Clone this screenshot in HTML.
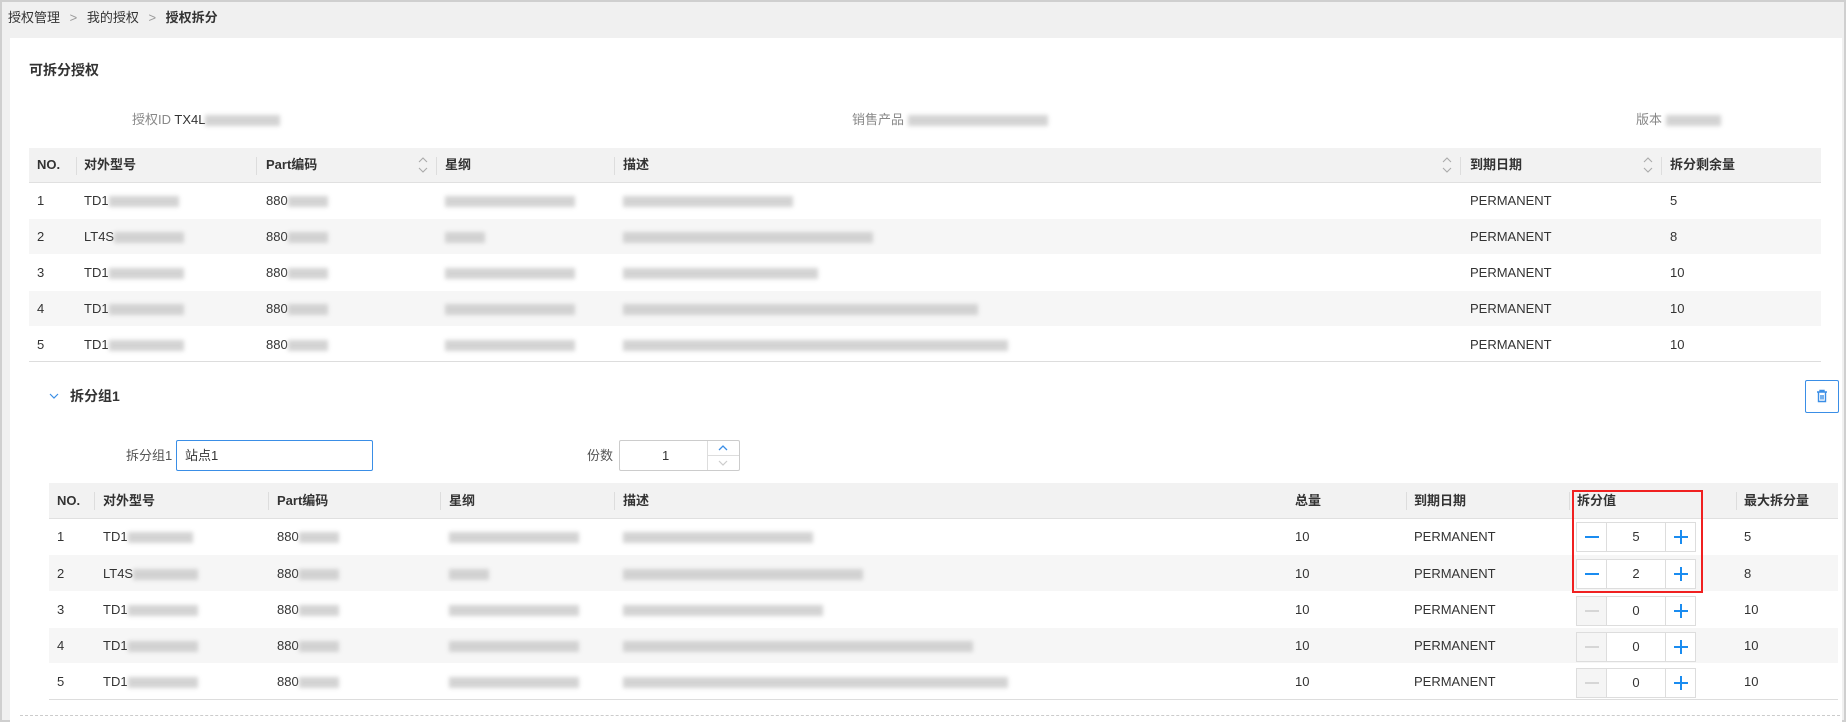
<!DOCTYPE html>
<html><head><meta charset="utf-8"><style>
*{box-sizing:border-box;margin:0;padding:0}
body{width:1846px;height:722px;background:#f0f0f0;font-family:"Liberation Sans","Noto Sans CJK SC",sans-serif;font-size:13px;color:#333;position:relative;overflow:hidden;border:2px solid #cfcfcf}
.a{position:absolute;white-space:nowrap;line-height:16px}
.card{position:absolute;left:8px;top:36px;width:1832px;height:684px;background:#fff}
.bl{display:inline-block;height:11px;background:#c8c8c8;filter:blur(2px);vertical-align:middle;opacity:.8}
.hd{position:absolute;background:#f2f2f2;border-bottom:1px solid #e0e0e0}
.row{position:absolute;border-bottom:1px solid #fff}
.alt{background:#f6f6f6}
.sep{position:absolute;width:1px;height:18px;background:#ddd}
.th{font-weight:bold;color:#333}
.sort{position:absolute}
.step{position:absolute;width:120px;height:30px;border:1px solid #ddd;background:#fff}
.step .m{position:absolute;left:0;top:0;width:30px;height:28px;border-right:1px solid #ddd}
.step .p{position:absolute;right:0;top:0;width:30px;height:28px;border-left:1px solid #ddd}
.step .v{position:absolute;left:30px;right:30px;top:6px;text-align:center;font-size:13px;line-height:16px}
</style></head><body>
<div class="a" style="left:6px;top:8px;font-size:13px;color:#333">授权管理 <span style="color:#999;margin:0 6px">&gt;</span> 我的授权 <span style="color:#999;margin:0 6px">&gt;</span> <b>授权拆分</b></div>
<div class="card"></div>
<div class="a" style="left:27px;top:60px;font-weight:bold;font-size:14px">可拆分授权</div>
<div class="a" style="left:130px;top:110px;color:#888">授权ID <span style="color:#333">TX4L</span><span class="bl" style="width:75px"></span></div>
<div class="a" style="left:850px;top:110px;color:#888">销售产品 <span class="bl" style="width:140px"></span></div>
<div class="a" style="left:1634px;top:110px;color:#888">版本 <span class="bl" style="width:55px"></span></div>

<!-- table 1 -->
<div class="hd" style="left:27px;top:146px;width:1792px;height:35px"></div>
<div class="a th" style="left:35px;top:155px">NO.</div>
<div class="sep" style="left:74px;top:155px"></div><div class="a th" style="left:82px;top:155px">对外型号</div>
<div class="sep" style="left:254px;top:155px"></div><div class="a th" style="left:264px;top:155px">Part编码</div>
<svg class="sort" style="left:415px;top:154px" width="12" height="18"><path d="M2 6L6 2L10 6M2 12L6 16L10 12" fill="none" stroke="#aaa" stroke-width="1.1"/></svg>
<div class="sep" style="left:434px;top:155px"></div><div class="a th" style="left:443px;top:155px">星纲</div>
<div class="sep" style="left:612px;top:155px"></div><div class="a th" style="left:621px;top:155px">描述</div>
<svg class="sort" style="left:1439px;top:154px" width="12" height="18"><path d="M2 6L6 2L10 6M2 12L6 16L10 12" fill="none" stroke="#aaa" stroke-width="1.1"/></svg>
<div class="sep" style="left:1458px;top:155px"></div><div class="a th" style="left:1468px;top:155px">到期日期</div>
<svg class="sort" style="left:1640px;top:154px" width="12" height="18"><path d="M2 6L6 2L10 6M2 12L6 16L10 12" fill="none" stroke="#aaa" stroke-width="1.1"/></svg>
<div class="sep" style="left:1659px;top:155px"></div><div class="a th" style="left:1668px;top:155px">拆分剩余量</div>

<div class="row" style="left:27px;top:181px;width:1792px;height:36px"></div>
<div class="row alt" style="left:27px;top:217px;width:1792px;height:36px"></div>
<div class="row" style="left:27px;top:253px;width:1792px;height:36px"></div>
<div class="row alt" style="left:27px;top:289px;width:1792px;height:36px"></div>
<div class="row" style="left:27px;top:325px;width:1792px;height:35px;border-bottom:1px solid #ddd"></div>

<div class="a" style="left:35px;top:191px">1</div><div class="a" style="left:82px;top:191px">TD1<span class="bl" style="width:70px"></span></div><div class="a" style="left:264px;top:191px">880<span class="bl" style="width:40px"></span></div><div class="a" style="left:443px;top:191px"><span class="bl" style="width:130px"></span></div><div class="a" style="left:621px;top:191px"><span class="bl" style="width:170px"></span></div><div class="a" style="left:1468px;top:191px">PERMANENT</div><div class="a" style="left:1668px;top:191px">5</div>
<div class="a" style="left:35px;top:227px">2</div><div class="a" style="left:82px;top:227px">LT4S<span class="bl" style="width:70px"></span></div><div class="a" style="left:264px;top:227px">880<span class="bl" style="width:40px"></span></div><div class="a" style="left:443px;top:227px"><span class="bl" style="width:40px"></span></div><div class="a" style="left:621px;top:227px"><span class="bl" style="width:250px"></span></div><div class="a" style="left:1468px;top:227px">PERMANENT</div><div class="a" style="left:1668px;top:227px">8</div>
<div class="a" style="left:35px;top:263px">3</div><div class="a" style="left:82px;top:263px">TD1<span class="bl" style="width:75px"></span></div><div class="a" style="left:264px;top:263px">880<span class="bl" style="width:40px"></span></div><div class="a" style="left:443px;top:263px"><span class="bl" style="width:130px"></span></div><div class="a" style="left:621px;top:263px"><span class="bl" style="width:195px"></span></div><div class="a" style="left:1468px;top:263px">PERMANENT</div><div class="a" style="left:1668px;top:263px">10</div>
<div class="a" style="left:35px;top:299px">4</div><div class="a" style="left:82px;top:299px">TD1<span class="bl" style="width:75px"></span></div><div class="a" style="left:264px;top:299px">880<span class="bl" style="width:40px"></span></div><div class="a" style="left:443px;top:299px"><span class="bl" style="width:130px"></span></div><div class="a" style="left:621px;top:299px"><span class="bl" style="width:355px"></span></div><div class="a" style="left:1468px;top:299px">PERMANENT</div><div class="a" style="left:1668px;top:299px">10</div>
<div class="a" style="left:35px;top:335px">5</div><div class="a" style="left:82px;top:335px">TD1<span class="bl" style="width:75px"></span></div><div class="a" style="left:264px;top:335px">880<span class="bl" style="width:40px"></span></div><div class="a" style="left:443px;top:335px"><span class="bl" style="width:130px"></span></div><div class="a" style="left:621px;top:335px"><span class="bl" style="width:385px"></span></div><div class="a" style="left:1468px;top:335px">PERMANENT</div><div class="a" style="left:1668px;top:335px">10</div>

<!-- group -->
<svg class="a" style="left:47px;top:390px" width="10" height="8"><path d="M1 2 L5 6 L9 2" fill="none" stroke="#3a8ee6" stroke-width="1.2"/></svg>
<div class="a" style="left:68px;top:386px;font-weight:bold;font-size:14px">拆分组1</div>
<div class="a" style="left:1803px;top:378px;width:34px;height:33px;border:1px solid #3a8ee6;border-radius:2px"></div>
<svg class="a" style="left:1812px;top:386px" width="16" height="16"><path d="M3 4h10M6 4V2.5h4V4M4.5 4.5v9h7v-9M7 7v4.5M9 7v4.5" fill="none" stroke="#3a8ee6" stroke-width="1.4"/></svg>

<div class="a" style="left:124px;top:446px;color:#555">拆分组1</div>
<div class="a" style="left:174px;top:438px;width:197px;height:31px;border:1px solid #3a8ee6;border-radius:2px;padding:7px 8px">站点1</div>
<div class="a" style="left:585px;top:446px;color:#555">份数</div>
<div class="a" style="left:617px;top:438px;width:121px;height:31px;border:1px solid #ccc;border-radius:2px"></div>
<div class="a" style="left:660px;top:446px">1</div>
<div class="a" style="left:705px;top:439px;width:1px;height:29px;background:#ddd"></div>
<div class="a" style="left:706px;top:453px;width:31px;height:1px;background:#ddd"></div>
<svg class="a" style="left:715px;top:441px" width="12" height="10"><path d="M2 7L6 3L10 7" fill="none" stroke="#3a8ee6" stroke-width="1.3"/></svg>
<svg class="a" style="left:715px;top:456px" width="12" height="10"><path d="M2 3L6 7L10 3" fill="none" stroke="#ccc" stroke-width="1.2"/></svg>

<!-- table 2 -->
<div class="hd" style="left:47px;top:481px;width:1789px;height:36px"></div>
<div class="a th" style="left:55px;top:491px">NO.</div>
<div class="sep" style="left:92px;top:490px"></div><div class="a th" style="left:101px;top:491px">对外型号</div>
<div class="sep" style="left:266px;top:490px"></div><div class="a th" style="left:275px;top:491px">Part编码</div>
<div class="sep" style="left:438px;top:490px"></div><div class="a th" style="left:447px;top:491px">星纲</div>
<div class="sep" style="left:612px;top:490px"></div><div class="a th" style="left:621px;top:491px">描述</div>
<div class="a th" style="left:1293px;top:491px">总量</div>
<div class="sep" style="left:1404px;top:490px"></div><div class="a th" style="left:1412px;top:491px">到期日期</div>
<div class="sep" style="left:1567px;top:490px"></div><div class="a th" style="left:1575px;top:491px">拆分值</div>
<div class="sep" style="left:1734px;top:490px"></div><div class="a th" style="left:1742px;top:491px">最大拆分量</div>

<div class="row" style="left:47px;top:517px;width:1789px;height:36px"></div>
<div class="row alt" style="left:47px;top:553px;width:1789px;height:37px"></div>
<div class="row" style="left:47px;top:590px;width:1789px;height:36px"></div>
<div class="row alt" style="left:47px;top:626px;width:1789px;height:36px"></div>
<div class="row" style="left:47px;top:662px;width:1789px;height:36px;border-bottom:1px solid #ddd"></div>

<div class="a" style="left:55px;top:527px">1</div><div class="a" style="left:101px;top:527px">TD1<span class="bl" style="width:65px"></span></div><div class="a" style="left:275px;top:527px">880<span class="bl" style="width:40px"></span></div><div class="a" style="left:447px;top:527px"><span class="bl" style="width:130px"></span></div><div class="a" style="left:621px;top:527px"><span class="bl" style="width:190px"></span></div><div class="a" style="left:1293px;top:527px">10</div><div class="a" style="left:1412px;top:527px">PERMANENT</div><div class="a" style="left:1742px;top:527px">5</div>
<div class="a" style="left:55px;top:564px">2</div><div class="a" style="left:101px;top:564px">LT4S<span class="bl" style="width:65px"></span></div><div class="a" style="left:275px;top:564px">880<span class="bl" style="width:40px"></span></div><div class="a" style="left:447px;top:564px"><span class="bl" style="width:40px"></span></div><div class="a" style="left:621px;top:564px"><span class="bl" style="width:240px"></span></div><div class="a" style="left:1293px;top:564px">10</div><div class="a" style="left:1412px;top:564px">PERMANENT</div><div class="a" style="left:1742px;top:564px">8</div>
<div class="a" style="left:55px;top:600px">3</div><div class="a" style="left:101px;top:600px">TD1<span class="bl" style="width:70px"></span></div><div class="a" style="left:275px;top:600px">880<span class="bl" style="width:40px"></span></div><div class="a" style="left:447px;top:600px"><span class="bl" style="width:130px"></span></div><div class="a" style="left:621px;top:600px"><span class="bl" style="width:200px"></span></div><div class="a" style="left:1293px;top:600px">10</div><div class="a" style="left:1412px;top:600px">PERMANENT</div><div class="a" style="left:1742px;top:600px">10</div>
<div class="a" style="left:55px;top:636px">4</div><div class="a" style="left:101px;top:636px">TD1<span class="bl" style="width:70px"></span></div><div class="a" style="left:275px;top:636px">880<span class="bl" style="width:40px"></span></div><div class="a" style="left:447px;top:636px"><span class="bl" style="width:130px"></span></div><div class="a" style="left:621px;top:636px"><span class="bl" style="width:350px"></span></div><div class="a" style="left:1293px;top:636px">10</div><div class="a" style="left:1412px;top:636px">PERMANENT</div><div class="a" style="left:1742px;top:636px">10</div>
<div class="a" style="left:55px;top:672px">5</div><div class="a" style="left:101px;top:672px">TD1<span class="bl" style="width:70px"></span></div><div class="a" style="left:275px;top:672px">880<span class="bl" style="width:40px"></span></div><div class="a" style="left:447px;top:672px"><span class="bl" style="width:130px"></span></div><div class="a" style="left:621px;top:672px"><span class="bl" style="width:385px"></span></div><div class="a" style="left:1293px;top:672px">10</div><div class="a" style="left:1412px;top:672px">PERMANENT</div><div class="a" style="left:1742px;top:672px">10</div>

<!-- steppers -->
<div class="step" style="left:1574px;top:520px"><div class="m"><svg width="30" height="28"><path d="M8 14h14" stroke="#1a8cf0" stroke-width="2"/></svg></div><div class="v">5</div><div class="p"><svg width="30" height="28"><path d="M8 14h14M15 7v14" stroke="#1a8cf0" stroke-width="2"/></svg></div></div>
<div class="step" style="left:1574px;top:557px"><div class="m"><svg width="30" height="28"><path d="M8 14h14" stroke="#1a8cf0" stroke-width="2"/></svg></div><div class="v">2</div><div class="p"><svg width="30" height="28"><path d="M8 14h14M15 7v14" stroke="#1a8cf0" stroke-width="2"/></svg></div></div>
<div class="step" style="left:1574px;top:594px"><div class="m" style="background:#f5f5f5"><svg width="30" height="28"><path d="M8 14h14" stroke="#ccc" stroke-width="1.5"/></svg></div><div class="v">0</div><div class="p"><svg width="30" height="28"><path d="M8 14h14M15 7v14" stroke="#1a8cf0" stroke-width="2"/></svg></div></div>
<div class="step" style="left:1574px;top:630px"><div class="m" style="background:#f5f5f5"><svg width="30" height="28"><path d="M8 14h14" stroke="#ccc" stroke-width="1.5"/></svg></div><div class="v">0</div><div class="p"><svg width="30" height="28"><path d="M8 14h14M15 7v14" stroke="#1a8cf0" stroke-width="2"/></svg></div></div>
<div class="step" style="left:1574px;top:666px"><div class="m" style="background:#f5f5f5"><svg width="30" height="28"><path d="M8 14h14" stroke="#ccc" stroke-width="1.5"/></svg></div><div class="v">0</div><div class="p"><svg width="30" height="28"><path d="M8 14h14M15 7v14" stroke="#1a8cf0" stroke-width="2"/></svg></div></div>

<div class="a" style="left:1570px;top:488px;width:131px;height:103px;border:2px solid #f02020"></div>
<div class="a" style="left:18px;top:713px;width:1820px;border-top:1px dashed #ccc"></div>
</body></html>
